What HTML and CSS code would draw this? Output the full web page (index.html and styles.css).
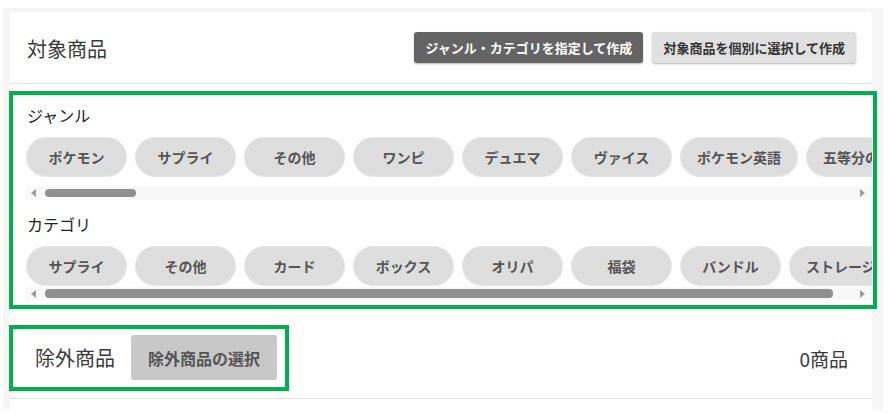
FILE: index.html
```html
<!DOCTYPE html>
<html lang="ja">
<head>
<meta charset="utf-8">
<title>対象商品</title>
<link rel="stylesheet" href="styles.css">
</head>
<body>
<div class="page">
  <div class="card">
    <div class="card-header">
      <h2 class="title">対象商品</h2>
      <div class="actions">
        <button class="btn btn-dark">ジャンル・カテゴリを指定して作成</button>
        <button class="btn btn-light">対象商品を個別に選択して作成</button>
      </div>
    </div>

    <div class="filter-box">
      <div class="filter-label">ジャンル</div>
      <div class="chip-row">
        <span class="chip">ポケモン</span>
        <span class="chip">サプライ</span>
        <span class="chip">その他</span>
        <span class="chip">ワンピ</span>
        <span class="chip">デュエマ</span>
        <span class="chip">ヴァイス</span>
        <span class="chip">ポケモン英語</span>
        <span class="chip">五等分の花嫁</span>
      </div>
      <div class="scrollbar sb-first">
        <span class="arrow arrow-left"></span>
        <div class="track"><div class="thumb" style="width: 91px"></div></div>
        <span class="arrow arrow-right"></span>
      </div>

      <div class="filter-label label-second">カテゴリ</div>
      <div class="chip-row">
        <span class="chip">サプライ</span>
        <span class="chip">その他</span>
        <span class="chip">カード</span>
        <span class="chip">ボックス</span>
        <span class="chip">オリパ</span>
        <span class="chip">福袋</span>
        <span class="chip">バンドル</span>
        <span class="chip">ストレージ</span>
      </div>
      <div class="scrollbar sb-second">
        <span class="arrow arrow-left"></span>
        <div class="track"><div class="thumb" style="width: 788px"></div></div>
        <span class="arrow arrow-right"></span>
      </div>
    </div>

    <div class="excl-row">
      <div class="excl-box">
        <h2 class="title excl-title">除外商品</h2>
        <button class="btn btn-excl">除外商品の選択</button>
      </div>
      <div class="count">0商品</div>
    </div>
  </div>
</div>
</body>
</html>
```

FILE: styles.css
```css
* { box-sizing: border-box; }

html, body {
  margin: 0;
  padding: 0;
  background: #ffffff;
}

body {
  font-family: "Noto Sans CJK JP", "Noto Sans", sans-serif;
  color: #333;
}

.page {
  margin: 8px 9px 0 3px;
  height: 402px;
  background: #f6f6f6;
  padding: 4px 11px 0 7px;
  overflow: hidden;
}

.card {
  background: #fff;
  border-radius: 4px 4px 0 0;
  height: 100%;
}

.card-header {
  height: 72px;
  display: flex;
  align-items: center;
  justify-content: space-between;
  padding: 0 16px 0 17px;
  border-bottom: 1px solid #e2e2e2;
}

.title {
  margin: 0;
  font-size: 20px;
  font-weight: 400;
  color: #3a3a3a;
  line-height: 28px;
  padding-top: 3px;
}

.actions {
  display: flex;
  gap: 9px;
  margin-bottom: 1px;
}

.btn {
  font-family: inherit;
  border: none;
  border-radius: 3px;
  font-weight: 700;
  cursor: pointer;
}

.btn-dark,
.btn-light {
  height: 31px;
  padding: 0 11px;
  font-size: 13px;
  box-shadow: 0 1px 2px rgba(0, 0, 0, 0.28);
}

.btn-dark {
  background: #646464;
  color: #fff;
}

.btn-light {
  background: #e0e0e0;
  color: #333;
}

.filter-box {
  margin: 7px -5px 0 -1px;
  border: 4px solid #00b050;
  padding: 0 1px 5px 13px;
}

.filter-label {
  font-size: 16px;
  line-height: 20px;
  color: #222;
  margin-top: 10px;
  padding-left: 1px;
}

.label-second {
  margin-top: 14px;
}

.chip-row {
  display: flex;
  gap: 8px;
  overflow: hidden;
  margin-top: 12px;
  white-space: nowrap;
}

.chip {
  flex-shrink: 0;
  min-width: 101px;
  height: 40px;
  padding: 0 16px;
  border-radius: 20px;
  background: #dedede;
  border: 1px solid #e6e6e6;
  display: flex;
  align-items: center;
  justify-content: center;
  font-size: 14px;
  font-weight: 700;
  color: #555;
}

.scrollbar {
  display: flex;
  align-items: center;
  background: #f8f8f8;
  padding: 0 7px 0 5px;
}

.sb-first {
  height: 14px;
  margin-top: 9px;
}

.sb-second {
  height: 13px;
  margin-top: 1px;
}

.arrow {
  width: 0;
  height: 0;
  border-top: 4px solid transparent;
  border-bottom: 4px solid transparent;
}

.arrow-left {
  border-right: 5px solid #9c9c9c;
}

.arrow-right {
  border-left: 5px solid #9c9c9c;
}

.track {
  flex: 1;
  margin: 0 9px;
  display: flex;
  align-items: center;
}

.thumb {
  height: 8px;
  border-radius: 4px;
  background: #8f8f8f;
}

.sb-second .thumb {
  height: 9px;
}

.excl-row {
  display: flex;
  align-items: center;
  justify-content: space-between;
  margin-top: 16px;
  padding: 0 24px 7px 0;
  border-bottom: 1px solid #e2e2e2;
}

.excl-box {
  margin-left: -1px;
  width: 280px;
  border: 4px solid #00b050;
  padding: 6px 8px 7px 22px;
  display: flex;
  align-items: center;
  gap: 16px;
}

.excl-title {
  padding-top: 0;
}

.btn-excl {
  height: 45px;
  flex: 1;
  background: #c8c8c8;
  color: #555;
  font-size: 16px;
  padding: 0;
}

.count {
  font-size: 19px;
  color: #3a3a3a;
}
```
